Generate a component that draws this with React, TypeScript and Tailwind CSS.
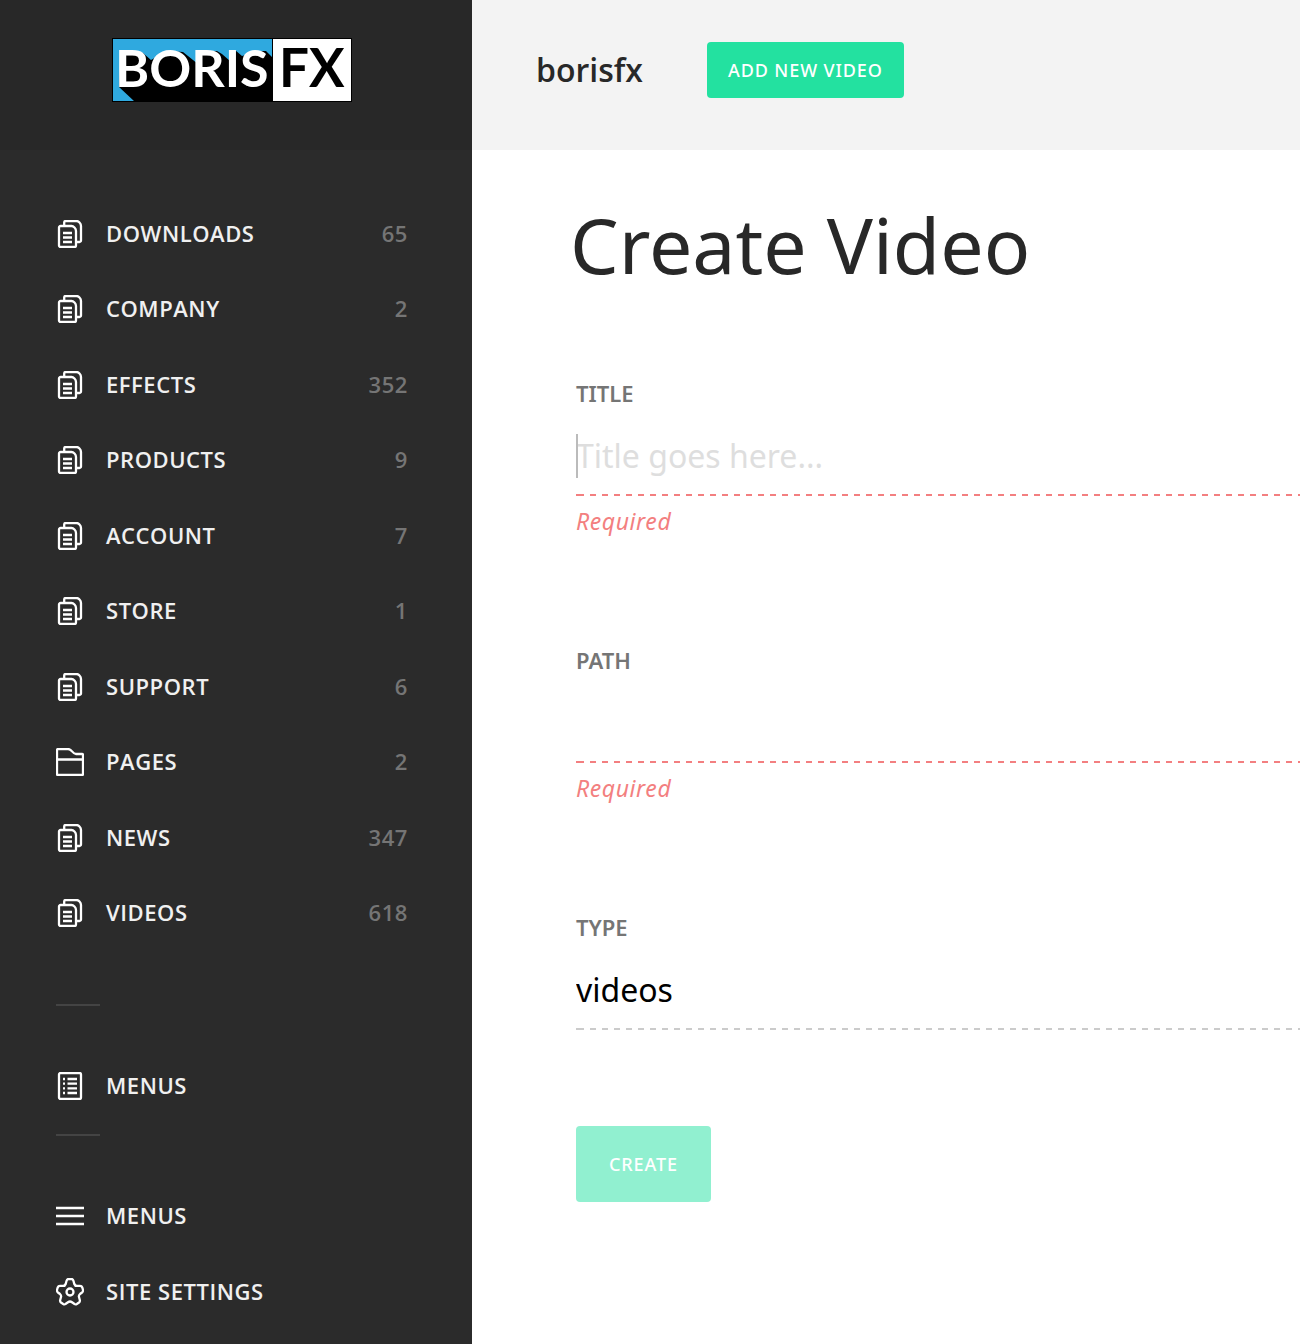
import { useState } from "react";
import type { ReactNode } from "react";

function Icon({ children }: { children: ReactNode }) {
  return (
    <svg
      aria-hidden="true"
      viewBox="0 0 28 28"
      className="size-7 shrink-0 text-white"
      fill="none"
      stroke="currentColor"
      strokeWidth="2.3"
    >
      {children}
    </svg>
  );
}

function DocsIcon() {
  return (
    <Icon>
      <path d="M3 7.500A1.500 1.500 0 0 1 4.500 6H15.500Q17 6 18.500 7.500Q20 9 20 11V25.500A1.500 1.500 0 0 1 18.500 27H4.500A1.500 1.500 0 0 1 3 25.500z" />
      <path d="M8.200 6V2.500A1.500 1.500 0 0 1 9.700 1H20.500Q22 1 23.500 2.500Q25 4 25 6V20.500A1.500 1.500 0 0 1 23.500 22H20" />
      <path d="M7 13h9M7 17.500h9M7 22h9" />
    </Icon>
  );
}

function FolderIcon() {
  return (
    <Icon>
      <path d="M1 2a1 1 0 0 1 1-1h10c4 0 4.500 5 8 5h6a1 1 0 0 1 1 1v19a1 1 0 0 1-1 1H2a1 1 0 0 1-1-1zM1 11.500h26" />
    </Icon>
  );
}

function ListIcon() {
  return (
    <Icon>
      <rect x="3" y="1" width="22" height="26" rx="1.500" />
      <path d="M7 7h2M7 11.700h2M7 16.400h2M7 21h2M11.500 7H21M11.500 11.700H21M11.500 16.400H21M11.500 21H21" />
    </Icon>
  );
}

function BarsIcon() {
  return (
    <Icon>
      <path d="M0 6h28M0 14h28M0 22h28" />
    </Icon>
  );
}

function GearIcon() {
  return (
    <Icon>
      <path
        d="M12.500 1h3Q17 1 17.500 3L18.300 6Q19 8 21 7.900L24 7.800Q25.700 7.800 26.300 9.500L27 12Q27.200 13.500 26 14.500L24 16Q22.500 17.300 23 19L23.800 22Q24.200 23.500 23 24.500L20.800 26Q19.500 26.800 18.200 25.800L16 24.200Q14 22.800 12 24.200L9.800 25.800Q8.500 26.800 7.200 26L5 24.500Q3.800 23.500 4.200 22L5 19Q5.500 17.300 4 16L2 14.500Q.8 13.500 1 12L1.700 9.500Q2.300 7.800 4 7.800L7 7.900Q9 8 9.700 6L10.500 3Q11 1 12.500 1z"
        strokeLinejoin="round"
      />
      <circle cx="14" cy="14" r="3.500" />
    </Icon>
  );
}

function Logo() {
  return (
    <svg viewBox="0 -12 240 88" className="h-22 w-60" role="img" aria-label="Boris FX">
      <rect width="240" height="64" fill="#000" />
      <rect x="1" y="1" width="159" height="62" fill="#2fa9df" />
      <path
        d="M7 49L22 63H160V19L154 13L145 13L134 17L130 18L123 12H118V23L110 16L105 13H86V26L71 14L58 13L46 18L39 22L31 15L22 13H9z"
        fill="#000"
      />
      <rect x="161" y="1" width="78" height="62" fill="#fff" />
      <text x="3" y="49" fontFamily="Lato" fontWeight="700" fontSize="52" fill="#fff">
        BORIS
      </text>
      <text x="167" y="49" fontFamily="Lato" fontWeight="700" fontSize="53" fill="#000">
        FX
      </text>
    </svg>
  );
}

const collections = [
  { label: "Downloads", count: 65 },
  { label: "Company", count: 2 },
  { label: "Effects", count: 352 },
  { label: "Products", count: 9 },
  { label: "Account", count: 7 },
  { label: "Store", count: 1 },
  { label: "Support", count: 6 },
  { label: "Pages", count: 2, folder: true },
  { label: "News", count: 347 },
  { label: "Videos", count: 618 },
];

function NavLink({ icon, label, count }: { icon: ReactNode; label: string; count?: number }) {
  return (
    <a href="#" className="flex items-start font-['Open_Sans',sans-serif] text-[22px] leading-[26px] font-semibold tracking-wide">
      {icon}
      <span className="ml-[22px] grow uppercase text-[#f0f0f0]">{label}</span>
      {count !== undefined && <span className="text-[#757575]">{count}</span>}
    </a>
  );
}

function Divider() {
  return <hr className="w-11 border-0 border-t-2 border-[#444]" />;
}

function Field({
  id,
  label,
  value,
  placeholder,
  required,
  caret,
}: {
  id: string;
  label: string;
  value: string;
  placeholder?: string;
  required?: boolean;
  caret?: boolean;
}) {
  const [text, setText] = useState(value);
  return (
    <div className="h-[267px]">
      <label htmlFor={id} className="block text-[22px] leading-8 font-semibold uppercase text-[#757575]">
        {label}
      </label>
      <div className="relative mt-[18px]">
        <input
          id={id}
          value={text}
          onChange={(e) => setText(e.target.value)}
          placeholder={placeholder}
          className="block h-[67px] w-full pb-2.5 text-[32px] text-black outline-none placeholder:text-[#dedede]"
        />
        {caret && <span className="absolute top-[7px] left-0 h-11 w-0.5 bg-[#bbb]" />}
      </div>
      <div
        className={
          required
            ? "h-0.5 bg-[linear-gradient(90deg,#f37f80_2px,transparent_2px),repeating-linear-gradient(90deg,transparent_0_2px,#f37f80_2px_8px,transparent_8px_12px)]"
            : "h-0.5 bg-[linear-gradient(90deg,#cbcbcb_2px,transparent_2px),repeating-linear-gradient(90deg,transparent_0_2px,#cbcbcb_2px_8px,transparent_8px_12px)]"
        }
      />
      {required && <p className="mt-[9px] text-[23px] leading-8 italic tracking-wide text-[#f37f80]">Required</p>}
    </div>
  );
}

export default function App() {
  return (
    <div className="flex min-h-screen bg-white font-['Noto_Sans',sans-serif]">
      <aside className="w-[472px] shrink-0 bg-[#2b2b2b]">
        <div className="flex h-[150px] bg-[#282828] pt-[26px] pl-28">
          <Logo />
        </div>
        <nav className="pt-[70px] pr-16 pb-6 pl-14">
          <ul>
            {collections.map((c) => (
              <li key={c.label} className="odd:h-[75px] even:h-[76px]">
                <NavLink icon={c.folder ? <FolderIcon /> : <DocsIcon />} label={c.label} count={c.count} />
              </li>
            ))}
          </ul>
          <div className="mt-[29px]">
            <Divider />
          </div>
          <div className="mt-[66px] mb-[34px]">
            <NavLink icon={<ListIcon />} label="Menus" />
          </div>
          <Divider />
          <div className="mt-[66px] flex flex-col gap-12">
            <NavLink icon={<BarsIcon />} label="Menus" />
            <NavLink icon={<GearIcon />} label="Site Settings" />
          </div>
        </nav>
      </aside>
      <div className="min-w-0 grow">
        <header className="flex h-[150px] items-center bg-[#f3f3f3] pb-2.5 pl-16">
          <span className="font-['Open_Sans',sans-serif] text-[32px] font-semibold text-[#282828]">borisfx</span>
          <button
            type="button"
            className="ml-16 h-14 rounded bg-[#23e1a0] px-[21px] text-[18px] font-medium tracking-wider uppercase text-white"
          >
            Add new video
          </button>
        </header>
        <main className="pt-10 pl-[104px]">
          <h1 className="-ml-1.5 text-[77px] leading-[110px] text-[#282828]">Create Video</h1>
          <form className="mt-[77px]">
            <Field id="title" label="Title" value="" placeholder="Title goes here..." required caret />
            <Field id="path" label="Path" value="" required />
            <Field id="type" label="Type" value="videos" />
            <button
              type="button"
              disabled
              className="-mt-[52px] block h-[76px] rounded bg-[#91f0d0] px-[33px] text-[18px] font-medium tracking-wider uppercase text-white"
            >
              Create
            </button>
          </form>
        </main>
      </div>
    </div>
  );
}
